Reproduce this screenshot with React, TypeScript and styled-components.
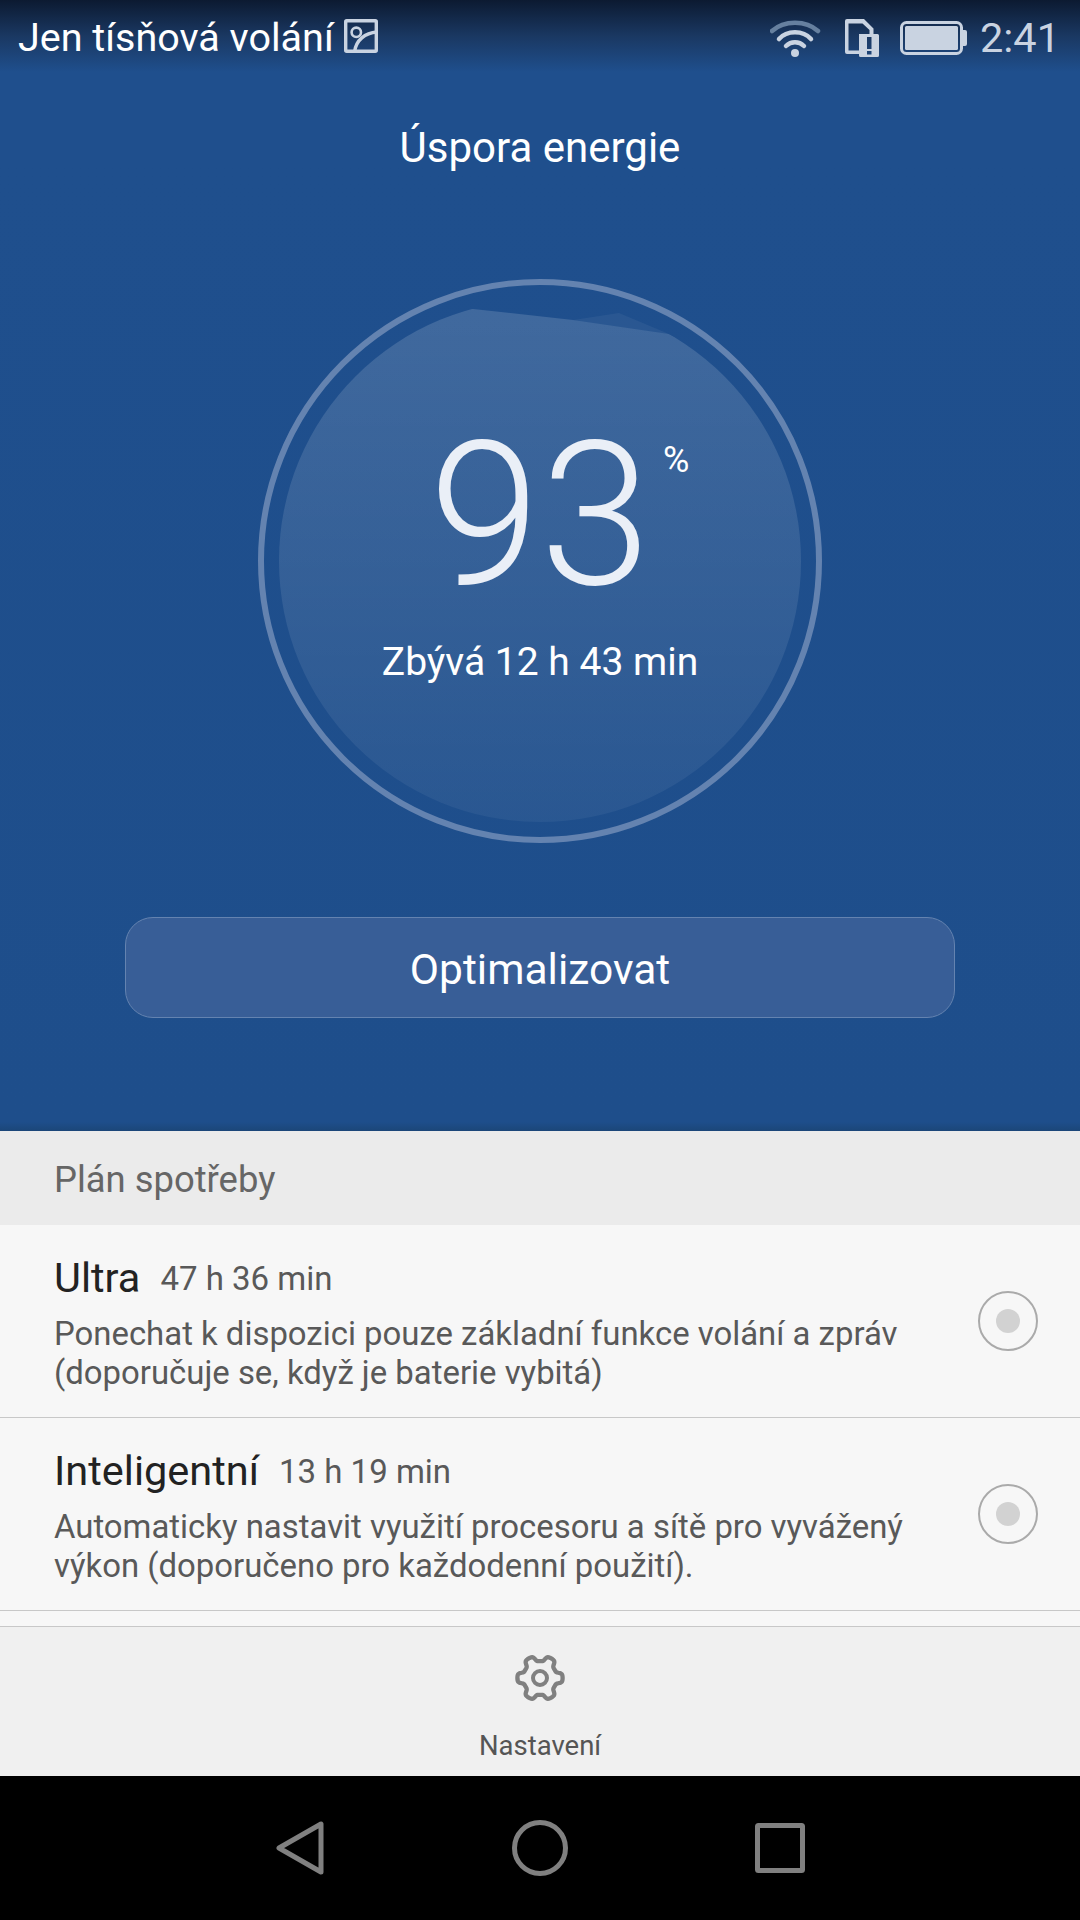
import React from 'react';
import styled, { createGlobalStyle } from 'styled-components';

const GlobalStyle = createGlobalStyle`
  html, body {
    margin: 0;
    padding: 0;
    background: #000;
  }
  * {
    box-sizing: border-box;
  }
`;

const plans = [
  {
    name: 'Ultra',
    time: '47 h 36 min',
    lines: ['Ponechat k dispozici pouze základní funkce volání a zpráv', '(doporučuje se, když je baterie vybitá)'],
  },
  {
    name: 'Inteligentní',
    time: '13 h 19 min',
    lines: ['Automaticky nastavit využití procesoru a sítě pro vyvážený', 'výkon (doporučeno pro každodenní použití).'],
  },
];

// six flat lobes with tight notches, same outline the system settings icon uses
const gearPath = () => {
  const pts: string[] = [];
  for (let i = 0; i < 180; i++) {
    const a = (i / 180) * Math.PI * 2;
    const lobe = Math.tanh(2.2 * Math.cos(6 * a)) / Math.tanh(2.2);
    const r = 19.7 + 2.9 * lobe;
    pts.push(`${(25 + r * Math.cos(a)).toFixed(2)} ${(25 + r * Math.sin(a)).toFixed(2)}`);
  }
  return `M${pts.join('L')}Z`;
};

const App: React.FC = () => (
  <Page>
    <GlobalStyle />
    <BlueArea>
      <StatusBar>
        <Carrier>
          <CarrierText>Jen tísňová volání</CarrierText>
          <PictureIcon width="34" height="34" viewBox="0 0 34 34" fill="none" stroke="#c9d3e1" strokeWidth="3.4">
            <rect x="1.7" y="1.7" width="30.6" height="30.6" rx="1" />
            <circle cx="12.3" cy="13.3" r="4.7" strokeWidth="2.6" />
            <path d="M10.5 33C12 21 21 14 33 13" />
          </PictureIcon>
        </Carrier>
        <StatusIcons>
          <svg width="54" height="38" viewBox="0 0 54 38" fill="none" strokeLinecap="round">
            <path d="M2 12C14 1 36 1 48 12" stroke="#66809f" strokeWidth="4.5" />
            <path d="M9 20C17 11 33 11 41 20" stroke="#c9d3e1" strokeWidth="4.5" />
            <path d="M16 27C21 22 29 22 34 27" stroke="#c9d3e1" strokeWidth="4.5" />
            <circle cx="25" cy="34" r="4" fill="#c9d3e1" />
          </svg>
          <svg width="34" height="38" viewBox="0 0 34 38" fill="#c9d3e1" fillRule="evenodd">
            <path d="M2 0H19L28.5 9.5V16H14V35H2Q0 35 0 33V2Q0 0 2 0ZM3.5 4.5V31.5H14V15H24.5V11L17.5 4.5Z" />
            <path d="M15.5 15H32.5Q34 15 34 16.5V36.5Q34 38 32.5 38H15.5Q14 38 14 36.5V16.5Q14 15 15.5 15ZM22 18V30H26.5V18ZM22 32V35.5H26.5V32Z" />
          </svg>
          <svg width="67" height="34" viewBox="0 0 67 34" fill="none">
            <rect x="1.5" y="1.5" width="60" height="31" rx="5" stroke="#c9d3e1" strokeWidth="3" />
            <rect x="5" y="5" width="53" height="24" rx="1.5" fill="#c9d3e1" />
            <path d="M63 9H65Q67 9 67 11V23Q67 25 65 25H63Z" fill="#c9d3e1" />
          </svg>
          <Clock>2:41</Clock>
        </StatusIcons>
      </StatusBar>
      <Title>Úspora energie</Title>
      <Gauge>
        <GaugeFill viewBox="0 0 522 522">
          <defs>
            <clipPath id="disc">
              <circle cx="261" cy="261" r="261" />
            </clipPath>
            <linearGradient id="liquid" x1="0" y1="0" x2="0" y2="1">
              <stop offset="0" stopColor="#fff" stopOpacity="0.15" />
              <stop offset="1" stopColor="#fff" stopOpacity="0.05" />
            </linearGradient>
          </defs>
          <g clipPath="url(#disc)">
            <path d="M294 20L340 13L390 34Z" fill="#fff" fillOpacity="0.05" />
            <path d="M194 9L294 20L390 34L522 100V522H0V9Z" fill="url(#liquid)" />
          </g>
        </GaugeFill>
        <Percent>
          93
          <PercentSign>%</PercentSign>
        </Percent>
        <Remaining>Zbývá 12 h 43 min</Remaining>
      </Gauge>
      <OptimizeButton>Optimalizovat</OptimizeButton>
    </BlueArea>

    <SectionHeader>Plán spotřeby</SectionHeader>
    <PlanList>
      {plans.map((plan) => (
        <PlanRow key={plan.name}>
          <PlanText>
            <PlanHead>
              <PlanName>{plan.name}</PlanName>
              <PlanTime>{plan.time}</PlanTime>
            </PlanHead>
            {plan.lines.map((line) => (
              <PlanDesc key={line}>{line}</PlanDesc>
            ))}
          </PlanText>
          <Radio />
        </PlanRow>
      ))}
    </PlanList>

    <Footer>
      <svg width="50" height="50" viewBox="0 0 50 50" fill="none" stroke="#808080">
        <path d={gearPath()} strokeWidth="4.3" strokeLinejoin="round" />
        <circle cx="25" cy="25" r="7" strokeWidth="4" />
      </svg>
      <FooterLabel>Nastavení</FooterLabel>
    </Footer>

    <NavBar>
      <svg width="48" height="54" viewBox="0 0 48 54" fill="none" stroke="#808080" strokeWidth="5" strokeLinejoin="round">
        <path d="M3 27L45 3V51Z" />
      </svg>
      <svg width="56" height="56" viewBox="0 0 56 56" fill="none" stroke="#808080" strokeWidth="5">
        <circle cx="28" cy="28" r="25.5" />
      </svg>
      <svg width="50" height="50" viewBox="0 0 50 50" fill="none" stroke="#808080" strokeWidth="5" strokeLinejoin="round">
        <rect x="2.5" y="2.5" width="45" height="45" rx="1" />
      </svg>
    </NavBar>
  </Page>
);

const Page = styled.div`
  width: 1080px;
  height: 1920px;
  display: flex;
  flex-direction: column;
  overflow: hidden;
  font-family: Roboto, 'Noto Sans', sans-serif;
  background: #f7f7f7;
`;

const BlueArea = styled.section`
  height: 1131px;
  display: flex;
  flex-direction: column;
  align-items: center;
  background: linear-gradient(
    180deg,
    #0c1a31 0,
    #1a3862 36px,
    #1f4f8d 72px,
    #1f4f8d 160px,
    #1e4e8b 1122px,
    #1b4678 1131px
  );
`;

const StatusBar = styled.div`
  width: 100%;
  height: 75px;
  display: flex;
  justify-content: space-between;
  align-items: center;
  padding: 0 20px 0 18px;
`;

const Carrier = styled.div`
  display: flex;
  align-items: center;
  gap: 10px;
`;

const CarrierText = styled.span`
  font-size: 39.5px;
  color: #fff;
`;

const PictureIcon = styled.svg`
  margin-top: -3px;
`;

const StatusIcons = styled.div`
  display: flex;
  align-items: center;
  gap: 21px;
`;

const Clock = styled.span`
  font-size: 41.5px;
  color: #c9d3e1;
  margin-left: -8px;
`;

const Title = styled.h1`
  margin: 47px 0 0;
  font-size: 42px;
  line-height: 52px;
  font-weight: 400;
  color: #fff;
`;

const Gauge = styled.div`
  position: relative;
  width: 564px;
  height: 564px;
  margin-top: 105px;
  border: 6px solid #6483b0;
  border-radius: 50%;
  display: flex;
  flex-direction: column;
  align-items: center;
`;

const GaugeFill = styled.svg`
  position: absolute;
  left: 15px;
  top: 15px;
  width: 522px;
  height: 522px;
`;

const Percent = styled.div`
  position: relative;
  margin-top: 121px;
  font-size: 200px;
  line-height: 220px;
  font-weight: 300;
  color: #eaeff7;
`;

const PercentSign = styled.span`
  position: absolute;
  left: 234px;
  top: 36px;
  font-size: 36px;
  line-height: 36px;
  font-weight: 400;
  color: #fff;
`;

const Remaining = styled.div`
  position: relative;
  margin-top: 11px;
  font-size: 39px;
  line-height: 50px;
  color: #fff;
`;

const OptimizeButton = styled.button`
  width: 830px;
  height: 101px;
  margin-top: 74px;
  padding: 4px 0 0;
  border: 1px solid #6483b0;
  border-radius: 28px;
  background: #385e97;
  font-family: inherit;
  font-size: 42.5px;
  color: #fff;
`;

const SectionHeader = styled.div`
  height: 94px;
  display: flex;
  align-items: center;
  padding: 3px 0 0 54px;
  background: #ebebeb;
  font-size: 36.4px;
  color: #666;
`;

const PlanList = styled.div`
  flex: 1;
  background: #f7f7f7;
`;

const PlanRow = styled.div`
  height: 193px;
  display: flex;
  align-items: center;
  justify-content: space-between;
  padding: 0 42px 0 54px;
  border-bottom: 1px solid #c8c8c8;
`;

const PlanText = styled.div`
  display: flex;
  flex-direction: column;
`;

const PlanHead = styled.div`
  display: flex;
  align-items: center;
  gap: 20px;
  margin-bottom: 8px;
`;

const PlanName = styled.span`
  font-size: 41.5px;
  line-height: 56px;
  color: #222;
`;

const PlanTime = styled.span`
  font-size: 33px;
  color: #595959;
`;

const PlanDesc = styled.div`
  font-size: 32.9px;
  line-height: 39px;
  color: #595959;
`;

const Radio = styled.div`
  width: 60px;
  height: 60px;
  border: 2px solid #aaa;
  border-radius: 50%;
  display: flex;
  align-items: center;
  justify-content: center;
  &::after {
    content: '';
    width: 24px;
    height: 24px;
    border-radius: 50%;
    background: #d2d2d2;
  }
`;

const Footer = styled.div`
  height: 150px;
  display: flex;
  flex-direction: column;
  align-items: center;
  padding-top: 26px;
  background: #f0f0f0;
  border-top: 1px solid #c8c8c8;
`;

const FooterLabel = styled.span`
  margin-top: 26px;
  font-size: 27.5px;
  color: #555;
`;

const NavBar = styled.nav`
  height: 144px;
  display: flex;
  align-items: center;
  background: #000;
  padding-left: 276px;
  gap: 187.5px;
`;

export default App;
